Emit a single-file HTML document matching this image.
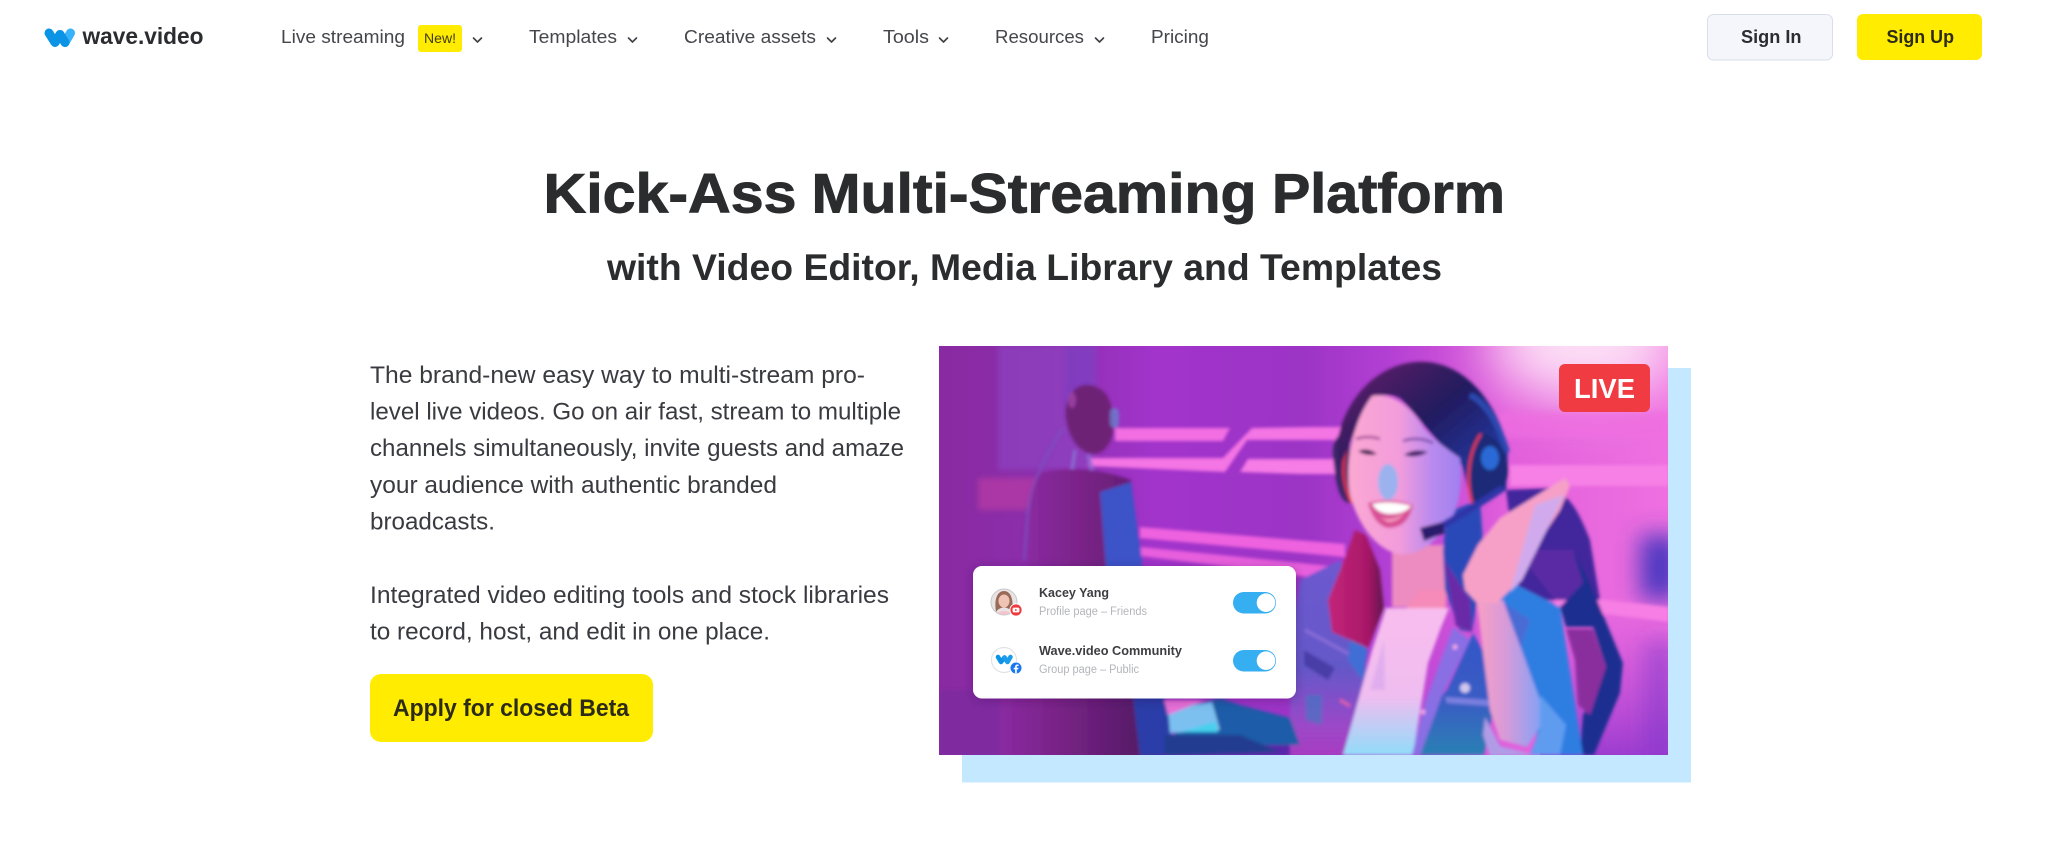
<!DOCTYPE html>
<html lang="en"><head><meta charset="utf-8"><title>wave.video</title>
<style>
html,body{margin:0;padding:0;background:#fff;width:2048px;height:853px;overflow:hidden}
svg{display:block}
text{font-family:"Liberation Sans",sans-serif}
.nav{font-size:18.5px;fill:#45464c}
.b{font-weight:700}
.body{font-size:24px;fill:#3a3b41}
.t{stroke:#2b2c2e;stroke-width:.9px;paint-order:stroke}
</style></head><body>
<svg width="2048" height="853" viewBox="0 0 2048 853" xmlns="http://www.w3.org/2000/svg">
<defs>
<linearGradient id="bg" x1="0" x2="1" y1="0" y2="0">
<stop offset="0" stop-color="#8a2aa2"/><stop offset=".14" stop-color="#8c2eac"/><stop offset=".3" stop-color="#a234cc"/><stop offset=".5" stop-color="#9c34c6"/><stop offset=".62" stop-color="#b440d4"/><stop offset=".78" stop-color="#e25fdc"/><stop offset="1" stop-color="#ee70e0"/>
</linearGradient>
<linearGradient id="lowR" x1="0" x2="0" y1="0" y2="1"><stop offset="0" stop-color="#c94fdc" stop-opacity="0"/><stop offset="1" stop-color="#9c3cd0"/></linearGradient>
<linearGradient id="shirt" x1="0" x2="0" y1="0" y2="1"><stop offset="0" stop-color="#f8bdee"/><stop offset=".6" stop-color="#f0bdf0"/><stop offset="1" stop-color="#92dcfa"/></linearGradient>
<linearGradient id="face" x1="0" x2="1" y1="0" y2="0"><stop offset="0" stop-color="#fba8d2"/><stop offset=".45" stop-color="#f39cdc"/><stop offset=".75" stop-color="#b88aee"/><stop offset="1" stop-color="#a080f0"/></linearGradient>
<linearGradient id="arm" x1="0" x2="1" y1="0" y2="0"><stop offset="0" stop-color="#f7a0c4"/><stop offset=".45" stop-color="#d89ad8"/><stop offset="1" stop-color="#86a2f4"/></linearGradient>
<linearGradient id="jackL" x1="0" x2="0" y1="0" y2="1"><stop offset="0" stop-color="#6e58d0"/><stop offset=".55" stop-color="#6458c8"/><stop offset=".85" stop-color="#9c48c8"/><stop offset="1" stop-color="#a83cc0"/></linearGradient>
<linearGradient id="denim" x1="0" x2="0" y1="0" y2="1"><stop offset="0" stop-color="#3456c8"/><stop offset=".55" stop-color="#3a5cc4"/><stop offset="1" stop-color="#2a80b4"/></linearGradient>
<linearGradient id="hair" x1="0" x2="1" y1="0" y2="1"><stop offset="0" stop-color="#6a1e6c"/><stop offset=".45" stop-color="#241a5e"/><stop offset=".8" stop-color="#2238a0"/><stop offset="1" stop-color="#1c2a80"/></linearGradient>
<linearGradient id="chairL" x1="0" x2="1" y1="0" y2="0"><stop offset="0" stop-color="#8a2aa2"/><stop offset=".4" stop-color="#7a2388"/><stop offset="1" stop-color="#561a68"/></linearGradient>
<linearGradient id="redh" x1="0" x2="1" y1="0" y2="0"><stop offset="0" stop-color="#c4257a"/><stop offset=".7" stop-color="#a81868"/><stop offset="1" stop-color="#601a50"/></linearGradient>
<filter id="soft" filterUnits="userSpaceOnUse" x="900" y="320" width="800" height="460"><feGaussianBlur stdDeviation="1.7"/></filter>
<filter id="softer" filterUnits="userSpaceOnUse" x="900" y="320" width="800" height="460"><feGaussianBlur stdDeviation="3"/></filter>
<filter id="blur8" filterUnits="userSpaceOnUse" x="900" y="300" width="820" height="480"><feGaussianBlur stdDeviation="12"/></filter>
<filter id="blur30" filterUnits="userSpaceOnUse" x="1300" y="200" width="600" height="400"><feGaussianBlur stdDeviation="28"/></filter>
<filter id="shadow" x="-10%" y="-10%" width="120%" height="130%"><feDropShadow dx="0" dy="2" stdDeviation="5" flood-color="#2a0a40" flood-opacity=".3"/></filter>
<clipPath id="ph"><rect x="939" y="346" width="729" height="409"/></clipPath>
<clipPath id="av"><circle cx="1004" cy="602" r="12.5"/></clipPath>
</defs>

<!-- LOGO -->
<polyline points="49,33 55,42.5 60,34.5" fill="none" stroke="#0b93e6" stroke-width="9" stroke-linecap="round" stroke-linejoin="round"/>
<polyline points="65,42.5 70.5,33" fill="none" stroke="#38b2f8" stroke-width="9" stroke-linecap="round"/>
<polyline points="60,34.5 65,42.5" fill="none" stroke="#0b93e6" stroke-width="9" stroke-linecap="round"/>
<text x="82.5" y="44" class="b" font-size="23" fill="#2b2c30" textLength="121" lengthAdjust="spacingAndGlyphs">wave.video</text>

<!-- NAV -->
<text x="281" y="43" class="nav" textLength="124" lengthAdjust="spacingAndGlyphs">Live streaming</text>
<rect x="418" y="25" width="44" height="27" rx="3" fill="#ffec00"/>
<text x="424" y="43" font-size="14" fill="#3f3c10" textLength="32" lengthAdjust="spacingAndGlyphs">New!</text>
<text x="529" y="43" class="nav" textLength="88" lengthAdjust="spacingAndGlyphs">Templates</text>
<text x="684" y="43" class="nav" textLength="132" lengthAdjust="spacingAndGlyphs">Creative assets</text>
<text x="883" y="43" class="nav" textLength="46" lengthAdjust="spacingAndGlyphs">Tools</text>
<text x="995" y="43" class="nav" textLength="89" lengthAdjust="spacingAndGlyphs">Resources</text>
<text x="1151" y="43" class="nav" textLength="58" lengthAdjust="spacingAndGlyphs">Pricing</text>
<g fill="none" stroke="#3f4046" stroke-width="1.6" stroke-linecap="round" stroke-linejoin="round">
<path d="M473.5 38l4 4 4-4"/><path d="M628.5 38l4 4 4-4"/><path d="M827.5 38l4 4 4-4"/><path d="M939.5 38l4 4 4-4"/><path d="M1095.5 38l4 4 4-4"/>
</g>

<!-- BUTTONS -->
<rect x="1707.5" y="14.5" width="125" height="45.5" rx="6" fill="#f4f6fb" stroke="#d8deea"/>
<text x="1741" y="43" class="b" font-size="18" fill="#2c2d33" textLength="60.5" lengthAdjust="spacingAndGlyphs">Sign In</text>
<rect x="1857" y="14" width="125" height="46" rx="6" fill="#ffec00"/>
<text x="1886.5" y="43" class="b" font-size="18" fill="#2c2b18" textLength="67.5" lengthAdjust="spacingAndGlyphs">Sign Up</text>

<!-- HEADINGS -->
<g fill="#2b2c2e">
<text x="543.5" y="212.5" class="b t" font-size="56" textLength="253" lengthAdjust="spacingAndGlyphs">Kick-Ass</text>
<text x="811.5" y="212.5" class="b t" font-size="56" textLength="445" lengthAdjust="spacingAndGlyphs">Multi-Streaming</text>
<text x="1272" y="212.5" class="b t" font-size="56" textLength="233" lengthAdjust="spacingAndGlyphs">Platform</text>
</g>
<text x="607" y="280" class="b" font-size="37" fill="#2b2c2e" textLength="835" lengthAdjust="spacingAndGlyphs">with Video Editor, Media Library and Templates</text>

<!-- BODY -->
<text x="370" y="383" class="body" textLength="495" lengthAdjust="spacingAndGlyphs">The brand-new easy way to multi-stream pro-</text>
<text x="370" y="419.5" class="body" textLength="531" lengthAdjust="spacingAndGlyphs">level live videos. Go on air fast, stream to multiple</text>
<text x="370" y="456" class="body" textLength="534" lengthAdjust="spacingAndGlyphs">channels simultaneously, invite guests and amaze</text>
<text x="370" y="493" class="body" textLength="407" lengthAdjust="spacingAndGlyphs">your audience with authentic branded</text>
<text x="370" y="529.5" class="body" textLength="125" lengthAdjust="spacingAndGlyphs">broadcasts.</text>
<text x="370" y="603" class="body" textLength="519" lengthAdjust="spacingAndGlyphs">Integrated video editing tools and stock libraries</text>
<text x="370" y="639.5" class="body" textLength="400" lengthAdjust="spacingAndGlyphs">to record, host, and edit in one place.</text>

<rect x="370" y="674" width="283" height="68" rx="11" fill="#ffec00"/>
<text x="393" y="716" class="b" font-size="24" fill="#2c2b18" textLength="236" lengthAdjust="spacingAndGlyphs">Apply for closed Beta</text>

<!-- BLUE BACK -->
<rect x="962" y="368" width="729" height="414.5" fill="#c4e8ff"/>

<!-- PHOTO -->
<g clip-path="url(#ph)">
<rect x="939" y="345" width="730" height="411" fill="url(#bg)"/>
<ellipse cx="1585" cy="345" rx="95" ry="55" fill="#fde0f6" filter="url(#blur30)"/>
<rect x="1540" y="600" width="130" height="156" fill="url(#lowR)"/>
<g filter="url(#softer)">
<rect x="998" y="345" width="98" height="125" fill="#8d41c0" opacity=".7"/>
<rect x="1065" y="345" width="30" height="70" fill="#7a3cc0" opacity=".6"/>
<rect x="978" y="478" width="70" height="32" fill="#b83aa4" opacity=".7"/>
<rect x="1497" y="412" width="172" height="26" fill="#ee6ce0" opacity=".7"/>
</g>
<g filter="url(#blur8)">
<rect x="1640" y="535" width="40" height="65" fill="#4c38c0"/>
<rect x="1645" y="640" width="30" height="116" fill="#7a36c8" opacity=".55"/>
</g>
<g filter="url(#soft)">
<!-- stripes -->
<path d="M1115 428H1230L1223 441H1115Z" fill="#f26ee2"/>
<path d="M1088 458H1223L1252 428 1310 427H1345V440H1310L1247 440 1225 472 1088 466Z" fill="#f474e4"/>
<path d="M1240 472L1248 459H1345V474H1300Z" fill="#f67ce6"/>
<path d="M1140 527L1345 544V557L1140 538Z" fill="#ef62df"/>
<path d="M1141 547L1330 566 1317 578 1141 556Z" fill="#e85edd"/>
<path d="M1510 465H1669V486H1510Z" fill="#f680e6"/>
<path d="M1555 594L1669 607V622L1555 608Z" fill="#f67ee4"/>
<path d="M1240 732L1310 746 1300 756 1245 738Z" fill="#f078e8"/>
<!-- webcam -->
<path d="M1070 395C1078 382 1095 382 1106 394 1116 410 1116 435 1108 445 1100 458 1086 456 1076 444 1066 430 1062 410 1070 395Z" fill="#6e2076"/>
<ellipse cx="1072" cy="400" rx="4" ry="8" fill="#a84ab0" opacity=".7"/>
<rect x="1110" y="408" width="9" height="20" rx="4.5" fill="#6a80d0" opacity=".8"/>
<path d="M1063 428C1050 450 1035 470 1028 510L1024 560" fill="none" stroke="#7a50c0" stroke-width="3" opacity=".7"/>
<path d="M1075 450L1072 470M1088 455L1092 470" stroke="#8a6ad0" stroke-width="3.5"/>
<!-- left chair -->
<path d="M1040 474C1060 466 1100 468 1131 480L1165 760H1026L1028 540C1028 510 1032 485 1040 474Z" fill="url(#chairL)"/>
<path d="M1100 492L1131 482 1142 560 1142 620 1110 620Z" fill="#3c52c8"/>
<rect x="939" y="690" width="70" height="66" fill="#8029a0"/>
<rect x="1000" y="695" width="138" height="61" fill="url(#chairL)"/>
<path d="M1132 690H1165L1175 756H1140Z" fill="#2a3ca8"/>
<path d="M1160 756L1215 725 1310 740 1300 756Z" fill="#5826a8"/>
<!-- right chair -->
<path d="M1506 490L1550 488C1570 495 1578 510 1590 540L1600 600 1520 600Z" fill="#43289c"/>
<path d="M1516 550L1574 550 1590 600 1555 600Z" fill="#5a2aa4"/>
<path d="M1573 550L1590 583 1623 663 1620 693 1594 755H1580L1583 715 1606 667 1593 627 1566 627 1560 607 1583 583Z" fill="#1e2f90"/>
<path d="M1566 629H1593L1606 667 1590 715 1578 705 1575 660Z" fill="#8a2e9e"/>
<!-- jacket left -->
<path d="M1340 560L1300 580 1290 640 1290 756H1420L1366 690 1366 650Z" fill="url(#jackL)"/>
<path d="M1304 650L1335 668 1328 680 1304 665Z" fill="#4a3ca8"/>
<path d="M1306 695H1322L1322 725 1306 720Z" fill="#3a7ac0" opacity=".6"/>
<path d="M1305 630L1360 660" stroke="#9a78e0" stroke-width="3" opacity=".7"/>
<path d="M1340 700L1350 706" stroke="#e860a8" stroke-width="2.5"/>
<!-- arm left sleeve -->
<path d="M1165 712L1220 698 1240 705 1290 718 1300 745 1215 745 1175 735Z" fill="#1e5ca8"/>
<path d="M1168 708L1212 702 1220 730 1170 733Z" fill="#7cc0f0"/>
<path d="M1164 700L1205 700 1168 715Z" fill="#e870d8"/>
<path d="M1180 732L1215 722 1218 732Z" fill="#46d0ee"/>
<path d="M1165 735L1240 735 1280 752 1165 756Z" fill="#233c90"/>
<!-- neck -->
<path d="M1392 545H1448L1446 607H1392Z" fill="#ec8cc0"/>
<path d="M1420 590L1447 590 1445 610H1405Z" fill="#f68ab8"/>
<!-- shirt -->
<path d="M1386 608H1449L1440 630 1428 663 1413 755 1343 755 1363 683 1372 650Z" fill="url(#shirt)"/>
<path d="M1384 640L1370 690 1385 690Z" fill="#d8a8ec" opacity=".7"/>
<!-- denim -->
<path d="M1415 755L1432 706 1447 690 1473 633 1490 663 1493 712 1484 755Z" fill="url(#denim)"/>
<path d="M1445 697L1490 700 1490 706 1447 703Z" fill="#7a80e0"/>
<circle cx="1465" cy="688" r="5" fill="#cfc8f0"/>
<!-- collar purple -->
<path d="M1453 627L1470 640 1443 693 1420 755 1412 755 1426 700Z" fill="#8a6ee4"/>
<circle cx="1455" cy="647" r="2.5" fill="#f4a8e0"/><circle cx="1423" cy="712" r="2.5" fill="#f4a8e0"/>
<path d="M1350 635L1368 650 1362 680 1348 660Z" fill="#3f6ed4"/>
<!-- jacket right -->
<path d="M1507 580L1560 607 1583 755 1533 755 1542 707 1517 637 1497 600Z" fill="#2f7ee2"/>
<path d="M1500 600L1530 620 1520 650Z" fill="#5a60cc" opacity=".6"/>
<!-- forearm -->
<path d="M1477 603L1503 600 1540 700 1540 727 1527 747 1500 740 1490 710Z" fill="url(#arm)"/>
<path d="M1485 717L1500 746 1535 755 1490 756 1483 735Z" fill="#b09ce6"/>
<path d="M1540 695L1566 725 1560 755 1530 755 1540 728Z" fill="#5f9cf0"/>
<!-- blue hair right -->
<path d="M1447 512L1480 500 1484 555 1472 632 1460 630 1445 590 1443 550Z" fill="#2c48b8"/>
<path d="M1444 560L1470 600 1472 632 1456 626Z" fill="#6a2aa8"/>
<!-- hand -->
<path d="M1463 575L1478 545 1500 518 1565 478 1570 486 1560 510 1530 555 1510 590 1497 603 1477 603 1465 590Z" fill="#f6a0c8"/>
<path d="M1535 505L1564 495 1522 580 1510 592Z" fill="#d0aaec"/>
<!-- red hair -->
<path d="M1355 530L1345 558 1328 600 1332 632 1368 648 1384 608 1380 570 1366 535Z" fill="url(#redh)"/>
<!-- left cup -->
<path d="M1334 465C1330 440 1338 432 1349 433L1352 503C1340 505 1336 485 1334 465Z" fill="#3a2866"/>
<path d="M1351 435C1340 460 1342 485 1352 503" fill="none" stroke="#e8344c" stroke-width="2.5"/>
<!-- hair -->
<path d="M1337 445C1342 405 1372 366 1415 362 1462 358 1496 400 1508 448L1506 490 1472 505 1462 465C1440 448 1422 420 1400 398 1382 390 1368 398 1360 418 1352 440 1345 452 1340 470Z" fill="url(#hair)"/>
<!-- face -->
<path d="M1372 396C1392 392 1410 405 1424 428 1436 442 1446 448 1460 458 1463 485 1460 512 1442 532 1427 550 1410 556 1398 554 1376 549 1358 525 1350 495 1345 470 1350 425 1372 396Z" fill="url(#face)"/>
<ellipse cx="1388" cy="482" rx="10" ry="18" fill="#7cb8f6" opacity=".75"/>
<path d="M1356 439Q1368 435 1380 439" fill="none" stroke="#a24a98" stroke-width="2.5"/>
<path d="M1403 441Q1418 436 1433 443" fill="none" stroke="#7a48a8" stroke-width="2.5"/>
<path d="M1358 451Q1368 447 1377 454 1367 457 1358 451Z" fill="#4c2056"/>
<path d="M1404 455Q1414 448 1428 452 1416 459 1404 455Z" fill="#44206a"/>
<!-- mouth -->
<path d="M1368 503Q1390 497 1413 505 1408 528 1388 528 1374 525 1368 503Z" fill="#d84e94"/>
<path d="M1372 504Q1390 500 1411 506 1405 514 1390 514 1378 514 1372 504Z" fill="#fff"/>
<path d="M1376 515Q1390 524 1404 513 1398 522 1388 522Z" fill="#f8a0c0"/>
<!-- right cup / headset -->
<path d="M1470 395C1490 405 1500 430 1507 452" fill="none" stroke="#2a48b0" stroke-width="6"/>
<path d="M1478 432C1500 436 1510 455 1508 475 1505 490 1490 505 1476 505 1462 490 1464 445 1478 432Z" fill="#1e2a78"/>
<ellipse cx="1490" cy="458" rx="9" ry="12" fill="#2a70e0" opacity=".9"/>
<path d="M1481 434C1468 452 1466 480 1472 503" fill="none" stroke="#e63a54" stroke-width="2.5"/>
<!-- mic -->
<path d="M1503 488Q1470 510 1435 530" fill="none" stroke="#2e34a8" stroke-width="7"/>
<path d="M1420 528L1443 522 1445 533 1424 541Z" fill="#2a1c6c"/>
</g>
</g>

<!-- LIVE -->
<rect x="1559" y="364" width="91" height="48" rx="6" fill="#ef3b41"/>
<text x="1574" y="398" class="b" font-size="28" fill="#fff" textLength="61" lengthAdjust="spacingAndGlyphs">LIVE</text>

<!-- CARD -->
<rect x="973" y="566" width="323" height="132.5" rx="9" fill="#fff" filter="url(#shadow)"/>
<text x="1039" y="597" class="b" font-size="12.5" fill="#3d3d42" textLength="70" lengthAdjust="spacingAndGlyphs">Kacey Yang</text>
<text x="1039" y="615" font-size="11.5" fill="#b4b5ba" textLength="108" lengthAdjust="spacingAndGlyphs">Profile page – Friends</text>
<text x="1039" y="655" class="b" font-size="12.5" fill="#3d3d42" textLength="143" lengthAdjust="spacingAndGlyphs">Wave.video Community</text>
<text x="1039" y="673" font-size="11.5" fill="#b4b5ba" textLength="100" lengthAdjust="spacingAndGlyphs">Group page – Public</text>

<rect x="1233" y="592" width="43" height="21.5" rx="10.7" fill="#36aef2"/><circle cx="1266" cy="602.7" r="9.3" fill="#fff"/>
<rect x="1233" y="650" width="43" height="21.5" rx="10.7" fill="#36aef2"/><circle cx="1266" cy="660.7" r="9.3" fill="#fff"/>

<!-- avatar 1 -->
<circle cx="1004" cy="602" r="13" fill="#e8e4e4" stroke="#c8c8cc" stroke-width="1"/>
<g clip-path="url(#av)">
<path d="M996 612C994 600 997 591 1004 591 1011 591 1014 600 1012 612 1008 606 1000 606 996 612Z" fill="#9a6a58"/>
<ellipse cx="1004" cy="601" rx="5.5" ry="6.5" fill="#f0c4b4"/>
<path d="M994 615Q1004 607 1015 615V618H994Z" fill="#f4c4cc"/>
</g>
<circle cx="1016" cy="610" r="6.6" fill="#fff"/>
<circle cx="1016" cy="610" r="5.6" fill="#ee3a3e"/>
<rect x="1012.6" y="607.6" width="6.8" height="4.8" rx="1.4" fill="#fff"/>
<path d="M1015.2 608.8v2.4l2.1-1.2z" fill="#ee3a3e"/>

<!-- avatar 2 -->
<circle cx="1004" cy="660" r="12.5" fill="#fff" stroke="#e2e3e6" stroke-width="1.2"/>
<polyline points="998,657 1001,662 1004.5,657.5" fill="none" stroke="#0b93e6" stroke-width="4.6" stroke-linecap="round" stroke-linejoin="round"/>
<polyline points="1004.5,657.5 1007.5,662 1010.5,657" fill="none" stroke="#1a9cec" stroke-width="4.6" stroke-linecap="round" stroke-linejoin="round"/>
<circle cx="1016" cy="668" r="6.4" fill="#fff"/>
<circle cx="1016" cy="668" r="5.5" fill="#1877f2"/>
<path d="M1016.8 673.3v-3.9h1.4l.3-1.6h-1.7v-1c0-.5.2-.8.9-.8h.9v-1.4c-.4-.1-.9-.1-1.3-.1-1.4 0-2.2.8-2.2 2.2v1.1h-1.4v1.6h1.4v3.9z" fill="#fff"/>
</svg>
</body></html>
